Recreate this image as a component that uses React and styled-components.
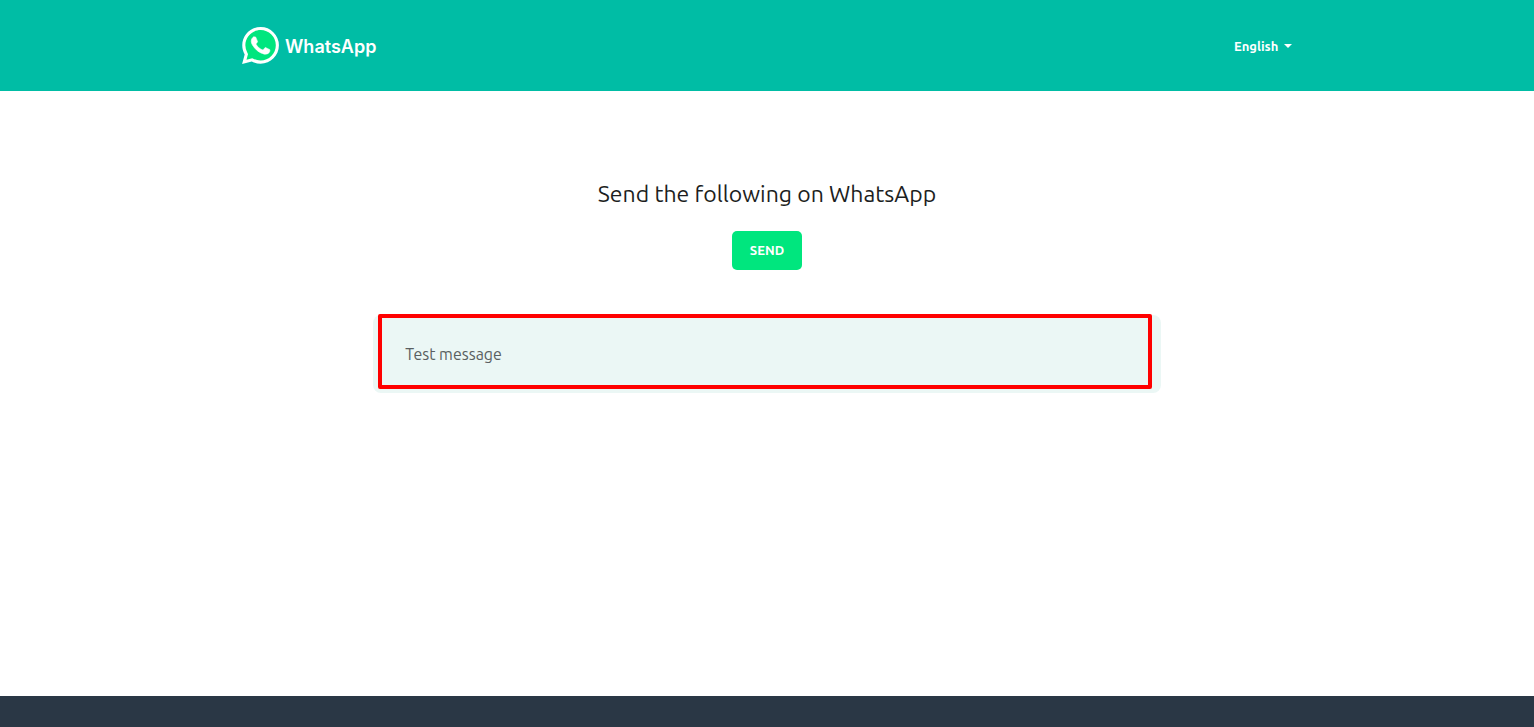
import React from "react";
import styled, { createGlobalStyle } from "styled-components";

const GlobalStyle = createGlobalStyle`
  * { box-sizing: border-box; }
  body {
    margin: 0;
    background: #fff;
    font-family: Ubuntu, "Noto Sans", "Open Sans", sans-serif;
  }
`;

const Page = styled.div`
  min-height: 100vh;
  display: flex;
  flex-direction: column;
`;

const Header = styled.header`
  background: #00bda5;
  padding: 27px 24px;
`;

const Container = styled.div`
  width: 100%;
  max-width: 1050px;
  margin: 0 auto;
`;

const HeaderRow = styled(Container)`
  display: flex;
  align-items: center;
  justify-content: space-between;
`;

const Brand = styled.a`
  display: flex;
  align-items: center;
  gap: 6px;
  color: #fff;
  text-decoration: none;
  font: 600 18px/18px Inter, sans-serif;
`;

const BrandName = styled.span`
  padding-top: 2px;
`;

const BrandMark = styled.svg`
  width: 37px;
  height: 37px;
  display: block;
`;

const LanguagePicker = styled.label`
  display: flex;
  align-items: center;
  gap: 5px;
  color: #fff;
`;

const LanguageSelect = styled.select`
  appearance: none;
  border: 0;
  margin: 0;
  padding: 0;
  background: transparent;
  color: inherit;
  font: 600 13px/18px Ubuntu, "Noto Sans", sans-serif;
`;

const Caret = styled.span`
  border: 4px solid transparent;
  border-top-color: #fff;
  border-bottom: 0;
`;

const Main = styled.main`
  flex: 1;
  padding: 87px 24px 48px;
`;

const Content = styled(Container)`
  display: flex;
  flex-direction: column;
  align-items: center;
`;

const Title = styled.h1`
  margin: 0 0 21px;
  color: #1c1e21;
  font-size: 23px;
  line-height: 32px;
  font-weight: 400;
  text-align: center;
`;

const SendButton = styled.button`
  min-width: 70px;
  border: 0;
  border-radius: 5px;
  padding: 10px 16px;
  background: #00e67e;
  color: #fff;
  font: 700 13px/19px Ubuntu, "Noto Sans", sans-serif;
  text-transform: uppercase;
  cursor: pointer;
`;

const Message = styled.div`
  position: relative;
  width: 75%;
  margin-top: 45px;
  padding: 27px 32px;
  border-radius: 8px;
  background: #ebf7f5;
  color: #5a5f61;
  font-size: 16px;
  line-height: 24px;
`;

const Highlight = styled.span`
  position: absolute;
  inset: -1px 9px 4px 5px;
  border: 4px solid #f00;
  border-radius: 2px;
  pointer-events: none;
`;

const Footer = styled.footer`
  height: 31px;
  background: #2a3745;
`;

function Logo() {
  return (
    <BrandMark viewBox="0 0 24 24" aria-hidden="true">
      <path
        fill="#fff"
        d="M20.464 3.488A11.815 11.815 0 0012.05 0C5.495 0 .16 5.335.157 11.892c0 2.096.547 4.142 1.588 5.945L.057 24l6.305-1.654a11.882 11.882 0 005.683 1.448h.005c6.554 0 11.89-5.335 11.893-11.893a11.821 11.821 0 00-3.479-8.413z"
      />
      <path
        fill="#00e67e"
        d="M12.051 21.785h-.004a9.87 9.87 0 01-5.031-1.378l-.361-.214-3.741.982.998-3.648-.235-.374a9.86 9.86 0 01-1.51-5.26c.001-5.45 4.436-9.884 9.888-9.884 2.64 0 5.122 1.03 6.988 2.898a9.825 9.825 0 012.893 6.994c-.003 5.45-4.437 9.884-9.885 9.884z"
      />
      <path
        fill="#fff"
        stroke="#fff"
        strokeWidth="0.4"
        d="M17.472 14.382c-.297-.149-1.758-.867-2.03-.967-.273-.099-.471-.148-.67.15-.197.297-.767.966-.94 1.164-.173.199-.347.223-.644.075-.297-.15-1.255-.463-2.39-1.475-.883-.788-1.48-1.761-1.653-2.059-.173-.297-.018-.458.13-.606.134-.133.298-.347.446-.52.149-.174.198-.298.298-.497.099-.198.05-.371-.025-.52-.075-.149-.669-1.612-.916-2.207-.242-.579-.487-.5-.669-.51a12.8 12.8 0 00-.57-.01c-.198 0-.52.074-.792.372-.272.297-1.04 1.016-1.04 2.479 0 1.462 1.065 2.875 1.213 3.074.149.198 2.096 3.2 5.077 4.487.709.306 1.262.489 1.694.625.712.227 1.36.195 1.871.118.571-.085 1.758-.719 2.006-1.413.248-.694.248-1.289.173-1.413-.074-.124-.272-.198-.57-.347z"
      />
    </BrandMark>
  );
}

export default function App() {
  return (
    <Page>
      <GlobalStyle />
      <Header>
        <HeaderRow>
          <Brand href="#">
            <Logo />
            <BrandName>WhatsApp</BrandName>
          </Brand>
          <LanguagePicker>
            <LanguageSelect aria-label="Language" defaultValue="en">
              <option value="en">English</option>
            </LanguageSelect>
            <Caret />
          </LanguagePicker>
        </HeaderRow>
      </Header>
      <Main>
        <Content>
          <Title>Send the following on WhatsApp</Title>
          <SendButton type="button">Send</SendButton>
          <Message>
            Test message
            <Highlight />
          </Message>
        </Content>
      </Main>
      <Footer />
    </Page>
  );
}
